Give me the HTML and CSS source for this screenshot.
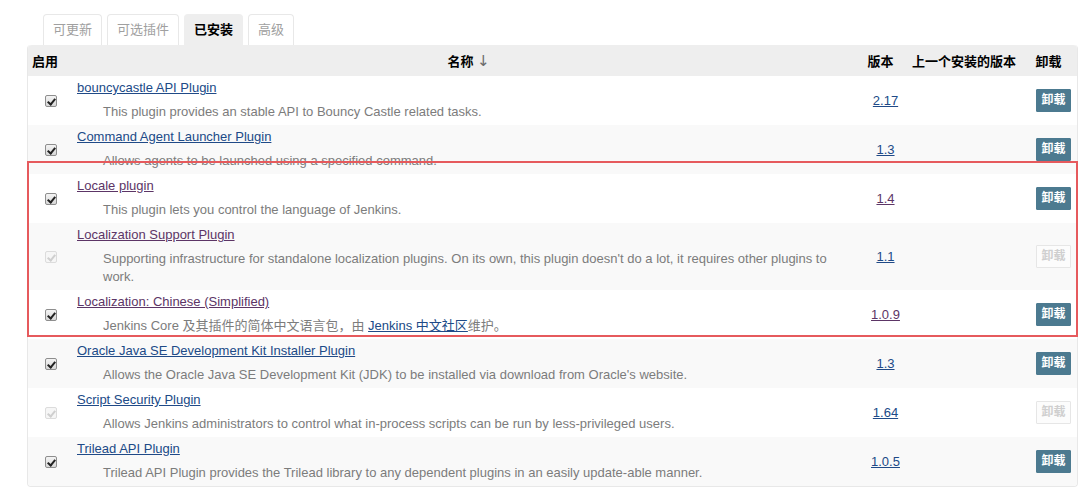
FILE: index.html
```html
<!DOCTYPE html>
<html lang="zh">
<head>
<meta charset="utf-8">
<title>插件管理</title>
<link rel="stylesheet" href="styles.css">
</head>
<body>
<div class="page">
  <div class="tabs">
    <span class="tab">可更新</span>
    <span class="tab">可选插件</span>
    <span class="tab active">已安装</span>
    <span class="tab">高级</span>
  </div>
  <div class="wrap">
    <table class="plugins">
      <colgroup>
        <col class="c-en"><col class="c-name"><col class="c-ver"><col class="c-prev"><col class="c-un">
      </colgroup>
      <thead>
        <tr>
          <th class="h-en">启用</th>
          <th class="h-name">名称 <span class="arrow">↓</span></th>
          <th class="h-ver">版本</th>
          <th class="h-prev">上一个安装的版本</th>
          <th class="h-un">卸载</th>
        </tr>
      </thead>
      <tbody>
        <tr>
          <td class="en"><span class="cb"></span></td>
          <td class="name"><a href="#">bouncycastle API Plugin</a><div class="desc">This plugin provides an stable API to Bouncy Castle related tasks.</div></td>
          <td class="ver"><a href="#">2.17</a></td>
          <td></td>
          <td class="un"><button class="btn">卸载</button></td>
        </tr>
        <tr class="alt">
          <td class="en"><span class="cb"></span></td>
          <td class="name"><a href="#">Command Agent Launcher Plugin</a><div class="desc">Allows agents to be launched using a specified command.</div></td>
          <td class="ver"><a href="#">1.3</a></td>
          <td></td>
          <td class="un"><button class="btn">卸载</button></td>
        </tr>
        <tr>
          <td class="en"><span class="cb"></span></td>
          <td class="name"><a href="#" class="visited">Locale plugin</a><div class="desc">This plugin lets you control the language of Jenkins.</div></td>
          <td class="ver"><a href="#" class="visited">1.4</a></td>
          <td></td>
          <td class="un"><button class="btn">卸载</button></td>
        </tr>
        <tr class="alt">
          <td class="en"><span class="cb off"></span></td>
          <td class="name"><a href="#" class="visited">Localization Support Plugin</a><div class="desc">Supporting infrastructure for standalone localization plugins. On its own, this plugin doesn't do a lot, it requires other plugins to work.</div></td>
          <td class="ver"><a href="#">1.1</a></td>
          <td></td>
          <td class="un"><button class="btn off">卸载</button></td>
        </tr>
        <tr>
          <td class="en"><span class="cb"></span></td>
          <td class="name"><a href="#" class="visited">Localization: Chinese (Simplified)</a><div class="desc">Jenkins Core 及其插件的简体中文语言包，由 <a href="#">Jenkins 中文社区</a>维护。</div></td>
          <td class="ver"><a href="#" class="visited">1.0.9</a></td>
          <td></td>
          <td class="un"><button class="btn">卸载</button></td>
        </tr>
        <tr class="alt">
          <td class="en"><span class="cb"></span></td>
          <td class="name"><a href="#">Oracle Java SE Development Kit Installer Plugin</a><div class="desc">Allows the Oracle Java SE Development Kit (JDK) to be installed via download from Oracle's website.</div></td>
          <td class="ver"><a href="#">1.3</a></td>
          <td></td>
          <td class="un"><button class="btn">卸载</button></td>
        </tr>
        <tr>
          <td class="en"><span class="cb off"></span></td>
          <td class="name"><a href="#">Script Security Plugin</a><div class="desc">Allows Jenkins administrators to control what in-process scripts can be run by less-privileged users.</div></td>
          <td class="ver"><a href="#">1.64</a></td>
          <td></td>
          <td class="un"><button class="btn off">卸载</button></td>
        </tr>
        <tr class="alt">
          <td class="en"><span class="cb"></span></td>
          <td class="name"><a href="#">Trilead API Plugin</a><div class="desc">Trilead API Plugin provides the Trilead library to any dependent plugins in an easily update-able manner.</div></td>
          <td class="ver"><a href="#">1.0.5</a></td>
          <td></td>
          <td class="un"><button class="btn">卸载</button></td>
        </tr>
      </tbody>
    </table>
    <div class="highlight"></div>
  </div>
</div>
</body>
</html>
```

FILE: styles.css
```css
* { box-sizing: border-box; }
html, body { margin: 0; padding: 0; background: #fff; }
body {
  font-family: "Liberation Sans", Arial, "Noto Sans CJK SC", sans-serif;
  font-size: 13px;
  color: #333;
}
.page { padding: 14px 0 0 27px; }
.tabs { display: flex; gap: 5px; padding-left: 16px; height: 31px; }
.tab {
  display: block;
  height: 31px;
  line-height: 30px;
  padding: 0 9px;
  border: 1px solid #e8e8e8;
  border-bottom: none;
  border-radius: 4px 4px 0 0;
  color: #a0a0a0;
  font-size: 13px;
}
.tab.active { background: #eee; color: #000; font-weight: bold; border-color: #eee; }

.wrap { position: relative; width: 1051px; }
.plugins {
  width: 1051px;
  table-layout: fixed;
  border-collapse: separate;
  border-spacing: 0;
  border: 1px solid #e8e8e8;
  border-top: none;
  border-radius: 4px;
}
.c-en { width: 39px; }
.c-name { width: 791px; }
.c-ver { width: 50px; }
.c-prev { width: 112px; }
.c-un { width: 57px; }

thead th {
  background: #eee;
  height: 31px;
  padding: 0;
  font-weight: bold;
  color: #000;
  font-size: 13px;
  text-align: center;
  vertical-align: middle;
}
thead th:first-child { border-top-left-radius: 4px; }
thead th:last-child { border-top-right-radius: 4px; }
.h-en { text-align: left; padding-left: 4px; }
.h-name { padding-left: 12px; }
.h-ver { padding-right: 5px; }
.arrow { font-weight: normal; color: #6a6a6a; font-size: 15px; font-family: "DejaVu Sans", sans-serif; }

tbody td { padding: 0; vertical-align: middle; }
tbody tr.alt td { background: #f9f9f9; }
tbody tr:last-child td:first-child { border-bottom-left-radius: 4px; }
tbody tr:last-child td:last-child { border-bottom-right-radius: 4px; }

td.en { padding-left: 17px; }
td.name { padding: 3px 10px 4px 10px; }
td.name > a { display: block; line-height: 17px; width: max-content; }
.desc { margin-top: 7px; margin-left: 26px; line-height: 18px; color: #7c7c7c; }
td.ver { text-align: center; padding-left: 5px; }
td.un { text-align: right; padding-right: 6px; }

a { color: #204a87; text-decoration: underline; }
a.visited { color: #5c3566; }

.cb {
  display: block;
  width: 12px;
  height: 12px;
  border: 1px solid #8e8e8e;
  border-radius: 2px;
  background: linear-gradient(#f4f4f4, #d8d8d8);
  position: relative;
}
.cb::after {
  content: "";
  position: absolute;
  left: 3px;
  top: 1px;
  width: 3px;
  height: 6px;
  border: solid #222;
  border-width: 0 2px 2px 0;
  transform: rotate(40deg);
}
.cb.off { border-color: #dcdcdc; background: #f6f6f6; }
.cb.off::after { border-color: #cfcfcf; }

.btn {
  font-family: "Liberation Sans", Arial, "Noto Sans CJK SC", sans-serif;
  font-size: 12px;
  font-weight: bold;
  color: #fff;
  background: #4c7a90;
  border: 1px solid #4c7a90;
  border-radius: 1px;
  width: 35px;
  height: 23px;
  padding: 0;
  line-height: 21px;
  vertical-align: middle;
}
.btn.off { background: #fcfcfc; color: #cfcfcf; border-color: #e6e6e6; }

.highlight {
  position: absolute;
  left: 0;
  top: 116px;
  width: 1051px;
  height: 176px;
  border: 2px solid #e65a5d;
  pointer-events: none;
}
```
